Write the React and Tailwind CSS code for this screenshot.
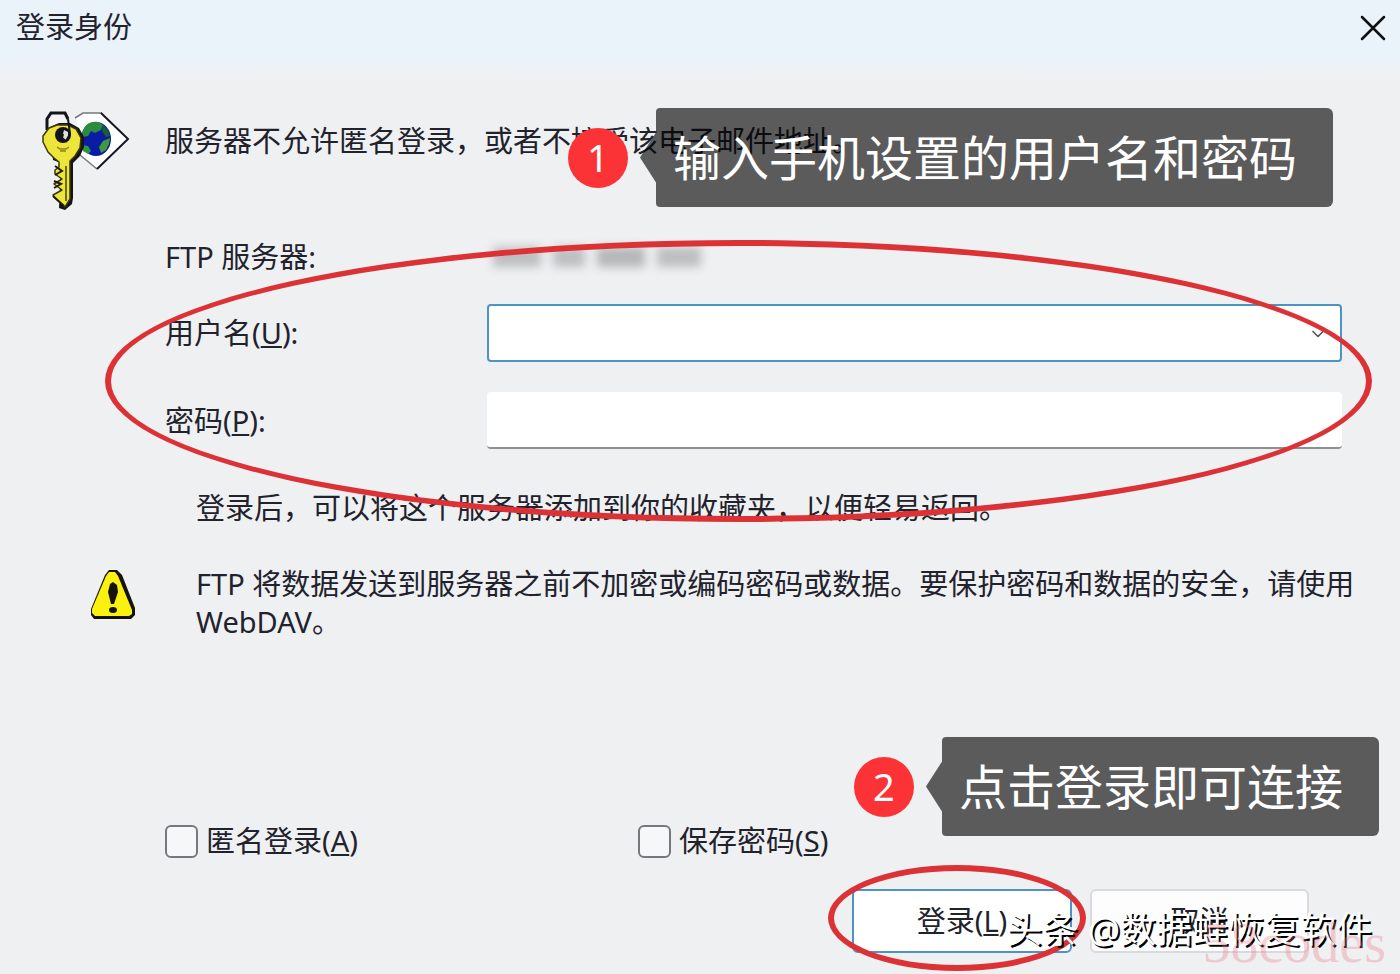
import { useState } from 'react';
import { ChevronDown } from 'lucide-react';

function KeyIcon() {
  return (
    <svg className="w-[92px] h-[102px]" viewBox="0 0 92 102" aria-hidden="true">
      {/* tag with globe */}
      <path d="M38 7l7-4h19l26 26-31 30-15-13z" fill="#fff" />
      <path d="M37 8l8-5h19M42 45l17 14" fill="none" stroke="#77777f" strokeWidth="1.5" />
      <path d="M63 3l27 26-31 30" fill="none" stroke="#151525" strokeWidth="2" />
      <ellipse cx="58" cy="29" rx="15" ry="17" fill="#0a1ca6" />
      <path d="M46 18c3-5 8-7 14-6l5 3-2 5-6 3-4-2-3 5-5 1-1-4z" fill="#2a8c3c" />
      <path d="M65 15l5 5 2 6-4 1-4-6z" fill="#17632f" />
      <path d="M65 31l7-3-1 6-3 6-5 3-2-6z" fill="#3f9a3c" />
      <path d="M44 35l6 1 3 5-3 3-5-3z" fill="#2f9440" />
      {/* ring behind the head */}
      <path d="M9 20V9l4-6h14l3 6" fill="#f4f4f6" stroke="#14141c" strokeWidth="3" />
      {/* key */}
      <path d="M12 17l9-4h11l9 5 5 9v10l-4 9-7 7v35l-1 6-7 6-6-2 2-45-8-3z" fill="#14141c" />
      <path
        d="M5 26l6-8 8-3h11l8 4 5 9-1 10-5 8-5 5v38l-5 8-11-10-1-2 9-5-8-6 8-5-7-5v-4l4-3v-5l-5-4-6-6-5-10z"
        fill="#eee53a"
        stroke="#3a380e"
        strokeWidth="1.5"
        strokeLinejoin="round"
      />
      <path d="M28 56v35" stroke="#6f6c14" strokeWidth="2" />
      <path d="M17 56l7 5-7 4M16 71l7 3-7 4M15 86l11 10" fill="none" stroke="#1e1d0c" strokeWidth="2" />
      <ellipse cx="25" cy="25" rx="8" ry="8" fill="#14141c" />
      <path d="M26 20l4 2v6l-3 3-3-3z" fill="#dfe0d8" />
      <path d="M30 9l2 15-4 7-4-3 1-4" fill="none" stroke="#14141c" strokeWidth="2" />
      <path d="M19 37l3 2h6l3-2M22 41h6" fill="none" stroke="#89851a" strokeWidth="1.5" />
    </svg>
  );
}

function WarningIcon() {
  return (
    <svg className="w-[46px] h-[50px]" viewBox="0 0 46 50" aria-hidden="true">
      <path d="M19 1h8l5 5 13 33v7l-4 4H4l-3-4v-6L15 6z" fill="#14140c" />
      <path d="M19 3h6l3 4 14 34v4l-3 2H5l-3-3v-4L16 7z" fill="#faf20e" />
      <path d="M20 15l3-2 4 3 1 7-4 12h-3l-3-12z" fill="#14140c" />
      <ellipse cx="23" cy="41" rx="4" ry="3" fill="#14140c" />
    </svg>
  );
}

function Callout({ number, text }) {
  return (
    <div className="flex items-center whitespace-nowrap">
      <span className="w-[60px] h-[60px] mr-3 rounded-full bg-[#fb3336] text-white text-[38px] leading-[58px] text-center">
        {number}
      </span>
      <span className="w-4 h-[50px] bg-black/62 [clip-path:polygon(100%_0,100%_100%,0_50%)]" />
      <span className="h-[99px] pl-[17px] pr-9 rounded-r-md rounded-l-sm bg-black/62 text-white text-[48px] leading-[99px]">
        {text}
      </span>
    </div>
  );
}

export default function App() {
  const [anonymous, setAnonymous] = useState(false);
  const [savePassword, setSavePassword] = useState(false);

  return (
    <div className="relative min-h-screen flex flex-col overflow-hidden bg-[#eff0f2] text-[#22222c] text-[29px] leading-[38px] font-['Noto_Sans','Noto_Sans_CJK_SC',sans-serif]">
      {/* Title bar */}
      <header className="h-20 pl-4 pr-3 pt-2 flex justify-between items-start bg-linear-to-b from-[#eaf2fa] from-70% to-[#eff0f2]">
        <h1>登录身份</h1>
        <button type="button" aria-label="关闭" className="p-px pt-1.5">
          <svg className="w-7 h-7" viewBox="0 0 28 28" fill="none" stroke="#111" strokeWidth="2.5" strokeLinecap="round">
            <path d="M3 3l22 22M25 3L3 25" />
          </svg>
        </button>
      </header>

      <main className="relative flex-1 flex flex-col">
        {/* Message */}
        <div className="relative h-[158px] pl-[38px] pt-[30px] flex items-start">
          <KeyIcon />
          <p className="pl-[35px] pt-3 whitespace-nowrap">服务器不允许匿名登录，或者不接受该电子邮件地址。</p>
          <div className="absolute top-7 right-[67px]">
            <Callout number={1} text="输入手机设置的用户名和密码" />
          </div>
        </div>

        {/* Credentials */}
        <form id="login" className="relative pl-[165px] pr-[58px] flex flex-col">
          <div className="flex items-center h-[38px]">
            <span className="w-[322px]">FTP 服务器:</span>
            <div className="flex gap-3 pl-1.5 blur-[5px]">
              <span className="w-12 h-5 bg-[#bcbec0]" />
              <span className="w-8 h-5 bg-[#bcbec0]" />
              <span className="w-12 h-5 bg-[#b4b6b8]" />
              <span className="w-11 h-5 bg-[#bcbec0]" />
            </div>
          </div>
          <div className="flex items-center mt-7">
            <label htmlFor="user" className="w-[322px]">
              用户名(<u>U</u>):
            </label>
            <div className="relative flex-1">
              <select id="user" className="block w-full h-[58px] px-3 appearance-none rounded-sm border-2 border-[#4d93c4] bg-white">
                <option value=""></option>
              </select>
              <ChevronDown className="absolute right-3.5 top-5 w-5 h-5 text-[#555] pointer-events-none" />
            </div>
          </div>
          <div className="flex items-center mt-[30px]">
            <label htmlFor="password" className="w-[322px]">
              密码(<u>P</u>):
            </label>
            <input id="password" type="password" className="flex-1 h-[57px] px-3 rounded-sm border-b-2 border-[#8d8f92] bg-white" />
          </div>
          <div className="absolute left-[105px] right-7 top-0.5 h-[282px] rounded-[50%] border-[6px] border-[#dc3236] pointer-events-none" />
          <p className="pl-[31px] mt-10">登录后，可以将这个服务器添加到你的收藏夹，以便轻易返回。</p>
        </form>

        {/* Plain text warning */}
        <div className="pl-[90px] pr-10 mt-[38px] flex items-start">
          <div className="pt-1">
            <WarningIcon />
          </div>
          <p className="flex-1 pl-[60px]">FTP 将数据发送到服务器之前不加密或编码密码或数据。要保护密码和数据的安全，请使用 WebDAV。</p>
        </div>

        {/* Options */}
        <div className="relative mt-auto pl-[165px] flex items-center">
          <label className="w-[473px] flex items-center gap-2">
            <input
              type="checkbox"
              checked={anonymous}
              onChange={(e) => setAnonymous(e.target.checked)}
              className="w-[33px] h-[33px] appearance-none rounded-md border-2 border-[#77787c] bg-[#f6f7f9] checked:bg-[#4d93c4]"
            />
            <span>匿名登录(<u>A</u>)</span>
          </label>
          <label className="flex items-center gap-2">
            <input
              type="checkbox"
              checked={savePassword}
              onChange={(e) => setSavePassword(e.target.checked)}
              className="w-[33px] h-[33px] appearance-none rounded-md border-2 border-[#77787c] bg-[#f6f7f9] checked:bg-[#4d93c4]"
            />
            <span>保存密码(<u>S</u>)</span>
          </label>
          <div className="absolute bottom-6 right-[21px]">
            <Callout number={2} text="点击登录即可连接" />
          </div>
        </div>

        {/* Actions */}
        <div className="flex justify-end gap-[18px] pr-[91px] mt-[29px] pb-[21px]">
          <div className="relative">
            <button type="submit" form="login" className="w-[220px] h-16 rounded-md border-2 border-[#4d93c4] bg-white">
              登录(<u>L</u>)
            </button>
            <div className="absolute -left-6 -right-3.5 -top-6 h-[106px] rounded-[50%] border-[6px] border-[#dc3236] pointer-events-none" />
          </div>
          <button type="button" className="w-[219px] h-16 rounded-md border-2 border-[#d9dadd] bg-[#fdfdfd]">取消</button>
        </div>
      </main>

      {/* Watermarks */}
      <span className="absolute right-7 bottom-[22px] text-[36px] leading-[44px] text-white whitespace-nowrap [text-shadow:2px_2px_0_#000] pointer-events-none">
        头条 @数据蛙恢复软件
      </span>
      <span className="absolute right-3.5 bottom-0 text-[56px] leading-[62px] text-[#e8707f]/30 font-['Liberation_Serif',serif] pointer-events-none">
        58codes
      </span>
    </div>
  );
}
